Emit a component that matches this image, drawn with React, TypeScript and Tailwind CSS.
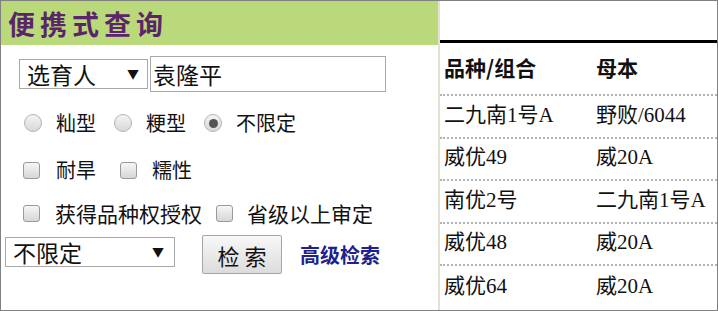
import React from "react";

const sans = { fontFamily: '"Noto Sans CJK SC", "Noto Sans", sans-serif' };

const rows = [
  { name: "二九南1号A", mother: "野败/6044", h: "h-[43px]" },
  { name: "威优49", mother: "威20A", h: "h-[42px]" },
  { name: "南优2号", mother: "二九南1号A", h: "h-[43px]" },
  { name: "威优48", mother: "威20A", h: "h-[42px]" },
  { name: "威优64", mother: "威20A", h: "h-[44px]" },
];

const Radio = ({ checked }: { checked?: boolean }) => (
  <span className="flex h-[18px] w-[18px] shrink-0 items-center justify-center rounded-full border border-[#b4b4b4] bg-gradient-to-b from-[#f4f4f4] to-[#d8d8d8]">
    {checked && <span className="h-[9px] w-[9px] rounded-full bg-[#555]" />}
  </span>
);

const Check = () => (
  <span className="block h-[17px] w-[17px] shrink-0 rounded-[3px] border border-[#9a9a9a] bg-gradient-to-b from-[#f6f6f6] to-[#d6d6d6]" />
);

export default function App() {
  return (
    <div
      className="flex h-[311px] w-[718px] border border-[#808080] bg-white text-[20px] leading-none text-[#111]"
      style={sans}
    >
      {/* left: search form */}
      <div className="flex w-[437px] shrink-0 flex-col">
        <div className="flex h-[44px] items-center bg-[#b9d97b] pl-[7px]">
          <span className="text-[27px] font-semibold tracking-[5px] text-[#5a2669]">便携式查询</span>
        </div>

        <div className="ml-[18px] mt-[11px] flex h-[36px] items-center text-[23px]">
          <div className="flex h-[30px] w-[129px] items-center justify-between border border-[#a9a9a9] pl-[7px] pr-[8px]">
            <span>选育人</span>
            <span className="text-[12px]">▼</span>
          </div>
          <input
            defaultValue="袁隆平"
            className="ml-[2px] h-[36px] w-[236px] border border-[#a9a9a9] px-[2px] text-[23px] outline-none"
            style={sans}
          />
        </div>

        <div className="ml-[23px] mt-[16px] flex h-[30px] items-center">
          <Radio />
          <span className="ml-[14px]">籼型</span>
          <span className="ml-[18px]"><Radio /></span>
          <span className="ml-[14px]">粳型</span>
          <span className="ml-[18px]"><Radio checked /></span>
          <span className="ml-[14px]">不限定</span>
        </div>

        <div className="ml-[22px] mt-[17px] flex h-[30px] items-center">
          <Check />
          <span className="ml-[16px]">耐旱</span>
          <span className="ml-[24px]"><Check /></span>
          <span className="ml-[15px]">糯性</span>
        </div>

        <div className="ml-[22px] mt-[13px] flex h-[30px] items-center text-[21px]">
          <Check />
          <span className="ml-[15px]">获得品种权授权</span>
          <span className="ml-[14px]"><Check /></span>
          <span className="ml-[14px]">省级以上审定</span>
        </div>

        <div className="ml-[4px] mt-[7px] flex h-[39px] items-start">
          <div className="mt-[2px] flex h-[30px] w-[170px] items-center justify-between border border-[#a9a9a9] pl-[7px] pr-[10px] text-[23px]">
            <span>不限定</span>
            <span className="text-[12px]">▼</span>
          </div>
          <button className="ml-[27px] h-[39px] w-[80px] rounded-[2px] border border-[#a6a6a6] bg-gradient-to-b from-[#f8f8f8] to-[#dcdcdc] text-[22px]">
            检 索
          </button>
          <span className="ml-[18px] self-center font-bold text-[#1f1f8f]">高级检索</span>
        </div>
      </div>

      {/* right: result table */}
      <div className="flex flex-1 flex-col border-l-2 border-[#dfe3cf] text-[21px]">
        <div className="h-[39px]" />
        <div className="border-t-[3px] border-black">
          <div className="flex h-[53px] items-center border-b-2 border-dotted border-[#b3b3b3] pb-[3px] font-bold">
            <span className="w-[156px] pl-[4px]">品种/组合</span>
            <span>母本</span>
          </div>
          {rows.map((r, i) => (
            <div
              key={i}
              className={`flex items-center pb-[3px] ${r.h} ${i < rows.length - 1 ? "border-b-2 border-dotted border-[#b3b3b3]" : ""}`}
              style={{ fontFamily: '"Liberation Serif", "Noto Sans CJK SC", serif' }}
            >
              <span className="w-[156px] pl-[4px]">{r.name}</span>
              <span>{r.mother}</span>
            </div>
          ))}
        </div>
      </div>
    </div>
  );
}
